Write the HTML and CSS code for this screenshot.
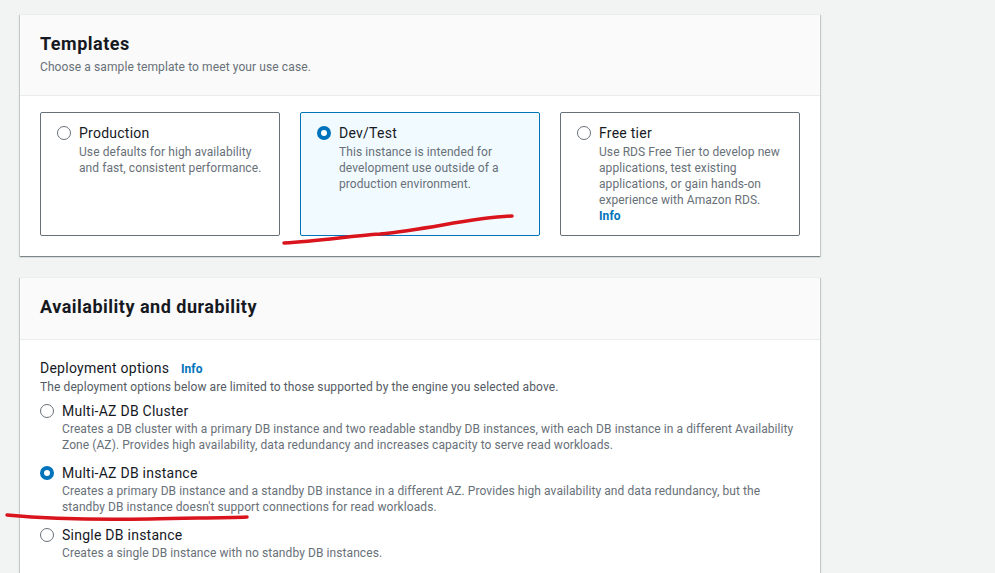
FILE: index.html
```html
<!DOCTYPE html>
<html lang="en">
<head>
<meta charset="utf-8">
<title>Create database</title>
<link rel="stylesheet" href="styles.css">
</head>
<body>
<main class="page">
  <section class="card">
    <header class="card-header">
      <h2 class="card-title">Templates</h2>
      <p class="card-desc">Choose a sample template to meet your use case.</p>
    </header>
    <div class="card-body tiles-body">
      <div class="tiles">
        <label class="tile">
          <span class="radio"></span>
          <span class="tile-text">
            <span class="option-label">Production</span>
            <span class="option-desc">Use defaults for high availability and fast, consistent performance.</span>
          </span>
        </label>
        <label class="tile tile-selected">
          <span class="radio radio-on"></span>
          <span class="tile-text">
            <span class="option-label">Dev/Test</span>
            <span class="option-desc">This instance is intended for development use outside of a production environment.</span>
          </span>
        </label>
        <label class="tile">
          <span class="radio"></span>
          <span class="tile-text">
            <span class="option-label">Free tier</span>
            <span class="option-desc">Use RDS Free Tier to develop new applications, test existing applications, or gain hands-on experience with Amazon RDS.</span>
            <a class="info-link" href="#">Info</a>
          </span>
        </label>
      </div>
    </div>
  </section>

  <section class="card">
    <header class="card-header header-tall">
      <h2 class="card-title">Availability and durability</h2>
    </header>
    <div class="card-body deploy-body">
      <div class="field-label">Deployment options <a class="info-link info-inline" href="#">Info</a></div>
      <p class="field-desc">The deployment options below are limited to those supported by the engine you selected above.</p>
      <div class="radio-group">
        <label class="radio-row">
          <span class="radio"></span>
          <span class="row-text">
            <span class="option-label">Multi-AZ DB Cluster</span>
            <span class="option-desc">Creates a DB cluster with a primary DB instance and two readable standby DB instances, with each DB instance in a different Availability Zone (AZ). Provides high availability, data redundancy and increases capacity to serve read workloads.</span>
          </span>
        </label>
        <label class="radio-row">
          <span class="radio radio-on"></span>
          <span class="row-text">
            <span class="option-label">Multi-AZ DB instance</span>
            <span class="option-desc">Creates a primary DB instance and a standby DB instance in a different AZ. Provides high availability and data redundancy, but the standby DB instance doesn't support connections for read workloads.</span>
          </span>
        </label>
        <label class="radio-row">
          <span class="radio"></span>
          <span class="row-text">
            <span class="option-label">Single DB instance</span>
            <span class="option-desc">Creates a single DB instance with no standby DB instances.</span>
          </span>
        </label>
      </div>
    </div>
  </section>
</main>

<svg class="scribble" width="995" height="573" viewBox="0 0 995 573" aria-hidden="true">
  <path d="M284 243 C 320 241, 350 236, 380 234 C 430 229, 470 218, 512 216" />
  <path d="M7 515 C 50 519, 100 520, 150 519 C 190 518, 220 518, 247 517" />
</svg>
</body>
</html>
```

FILE: styles.css
```css
* { box-sizing: border-box; }

html, body {
  margin: 0;
  padding: 0;
  background: #f2f3f3;
}

body {
  font-family: Roboto, "Noto Sans", Arial, sans-serif;
  color: #16191f;
  position: relative;
  height: 573px;
  overflow: hidden;
}

.page {
  padding: 14px 0 0 20px;
  display: flex;
  flex-direction: column;
  gap: 21px;
  width: 820px;
}

.card {
  background: #ffffff;
  box-shadow: 0 1px 1px 0 rgba(0, 28, 36, 0.3), 1px 1px 1px 0 rgba(0, 28, 36, 0.15), -1px 1px 1px 0 rgba(0, 28, 36, 0.15);
  border-top: 1px solid #eaeded;
}

.card-header {
  background: #fafafa;
  border-bottom: 1px solid #eaeded;
  padding: 18px 20px 20px;
}

.header-tall {
  padding: 18px 20px 21px;
}

.card-title {
  margin: 0;
  font-size: 18px;
  line-height: 22px;
  font-weight: 700;
  letter-spacing: 0.5px;
  color: #16191f;
}

.card-desc {
  margin: 4px 0 0;
  font-size: 12px;
  line-height: 16px;
  letter-spacing: 0.1px;
  color: #687078;
}

.card-body {
  padding: 16px 20px 20px;
}

.tiles {
  display: grid;
  grid-template-columns: repeat(3, 240px);
  gap: 20px;
}

.tile {
  display: flex;
  align-items: flex-start;
  gap: 8px;
  height: 124px;
  padding: 10px 16px 9px;
  border: 1px solid #687078;
  border-radius: 2px;
  background: #ffffff;
}

.tile-selected {
  background: #f1faff;
  border-color: #0073bb;
}

.radio {
  flex: none;
  width: 14px;
  height: 14px;
  margin-top: 3px;
  border-radius: 50%;
  border: 1.5px solid #687078;
  background: #ffffff;
}

.radio-on {
  border: 4px solid #0073bb;
}

.tile-text,
.row-text {
  display: flex;
  flex-direction: column;
}

.tile-text .option-desc {
  margin-top: 1px;
}

.option-label {
  font-size: 14px;
  line-height: 20px;
  letter-spacing: 0.25px;
  color: #16191f;
}

.option-desc {
  font-size: 12px;
  line-height: 16px;
  letter-spacing: 0.08px;
  color: #687078;
}

.info-link {
  font-size: 12px;
  line-height: 16px;
  font-weight: 700;
  letter-spacing: 0.1px;
  color: #0073bb;
  text-decoration: none;
}

.deploy-body {
  padding: 18px 20px 20px;
}

.field-label {
  font-size: 14px;
  line-height: 20px;
  letter-spacing: 0.25px;
  color: #16191f;
}

.info-inline {
  margin-left: 8px;
}

.field-desc {
  margin: 1px 0 0;
  font-size: 12px;
  line-height: 16px;
  letter-spacing: 0.1px;
  color: #545b64;
}

.radio-group {
  display: flex;
  flex-direction: column;
  gap: 10px;
  margin-top: 6px;
}

.radio-row {
  display: flex;
  align-items: flex-start;
  gap: 8px;
}

.scribble {
  position: absolute;
  left: 0;
  top: 0;
  pointer-events: none;
}

.scribble path {
  fill: none;
  stroke: #d9141c;
  stroke-width: 3.5;
  stroke-linecap: round;
}
```
